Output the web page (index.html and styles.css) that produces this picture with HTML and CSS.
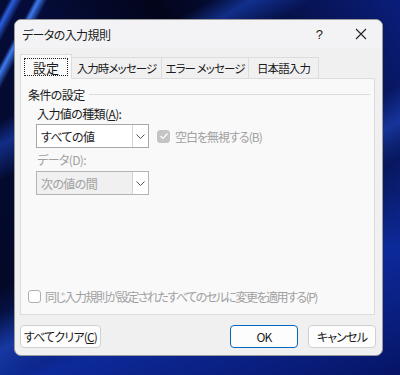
FILE: index.html
```html
<!DOCTYPE html>
<html lang="ja">
<head>
    <meta charset="utf-8">
    <title>データの入力規則</title>
    <link rel="stylesheet" href="styles.css">
</head>
<body>
    <div class="dialog">
        <div class="titlebar">
            <span class="title">データの入力規則</span>
            <span class="help">?</span>
            <span class="close">
                <svg width="12" height="12" viewBox="0 0 12 12"><path d="M1 1L11 11M11 1L1 11" stroke="#222" stroke-width="1.1"/></svg>
            </span>
        </div>

        <div class="tabs">
            <div class="tab active"><span class="focus">設定</span></div>
            <div class="tab">入力時メッセージ</div>
            <div class="tab">エラー メッセージ</div>
            <div class="tab">日本語入力</div>
        </div>

        <div class="panel">
            <div class="group-title">
                <span>条件の設定</span>
                <span class="rule"></span>
            </div>

            <div class="field-label">入力値の種類(<u>A</u>):</div>
            <div class="row">
                <div class="combo">
                    <span class="value">すべての値</span>
                    <span class="arrow"><svg width="9" height="5" viewBox="0 0 9 5"><path d="M0.5 0.5L4.5 4.5L8.5 0.5" fill="none" stroke="#555" stroke-width="1"/></svg></span>
                </div>
                <div class="check disabled">
                    <span class="box checked"><svg width="10" height="8" viewBox="0 0 10 8"><path d="M1.5 4L4 6.5L8.5 1.5" fill="none" stroke="#fff" stroke-width="1.2"/></svg></span>
                    <span class="ignore">空白を無視する(B)</span>
                </div>
            </div>

            <div class="field-label disabled">データ(D):</div>
            <div class="combo disabled">
                <span class="value">次の値の間</span>
                <span class="arrow"><svg width="9" height="5" viewBox="0 0 9 5"><path d="M0.5 0.5L4.5 4.5L8.5 0.5" fill="none" stroke="#555" stroke-width="1"/></svg></span>
            </div>

            <div class="check disabled apply">
                <span class="box"></span>
                <span class="apply-text">同じ入力規則が設定されたすべてのセルに変更を適用する(P)</span>
            </div>
        </div>

        <div class="footer">
            <button class="btn">すべてクリア(<u>C</u>)</button>
            <span class="spacer"></span>
            <button class="btn primary">OK</button>
            <button class="btn">キャンセル</button>
        </div>
    </div>
</body>
</html>
```

FILE: styles.css
```css
* {
    box-sizing: border-box;
}

body {
    margin: 0;
    width: 400px;
    height: 375px;
    overflow: hidden;
    font-family: "Noto Sans CJK JP", "Noto Sans", sans-serif;
    font-size: 12px;
    font-feature-settings: "palt";
    letter-spacing: -0.6px;
    white-space: nowrap;
    color: #1b1b1b;
    background:
        linear-gradient(118deg, transparent 0px, transparent 8px, #2a5fe0 12px, transparent 20px, transparent 30px, #3c7bf0 34px, transparent 42px),
        linear-gradient(150deg, transparent 20%, rgba(30, 80, 220, 0.5) 24%, transparent 30%, transparent 52%, rgba(40, 90, 230, 0.45) 58%, transparent 64%),
        linear-gradient(160deg, transparent 55%, #0d2a9a 75%, #061466 100%),
        linear-gradient(60deg, #030822 0%, #050c3a 40%, #02051a 60%, #0a1d7a 100%);
    padding: 19px 0 0 14px;
}

.dialog {
    width: 369px;
    height: 337px;
    background: #f0f0f0;
    border: 1px solid #9a9a9a;
    border-radius: 7px;
    display: flex;
    flex-direction: column;
    overflow: hidden;
}

.titlebar {
    height: 28px;
    display: flex;
    align-items: center;
    background: #f3f3f5;
    padding-left: 7px;
}

.title {
    flex: 1;
}

.help {
    width: 16px;
    text-align: center;
    font-family: "Liberation Sans", sans-serif;
    font-size: 13px;
    margin-right: 28px;
}

.close {
    width: 12px;
    height: 12px;
    margin-right: 15px;
    display: flex;
}

.tabs {
    display: flex;
    align-items: flex-end;
    margin: 6px 0 0 5px;
    height: 24px;
    position: relative;
    z-index: 1;
}

.tab {
    height: 21px;
    padding: 0;
    display: flex;
    align-items: center;
    justify-content: center;
    background: #f0f0f0;
    border: 1px solid #dcdcdc;
    border-bottom: none;
    margin-right: -1px;
    font-size: 11.5px;
    letter-spacing: -0.9px;
}

.tab:nth-child(2) { width: 91px; }
.tab:nth-child(3) { width: 88px; }
.tab:nth-child(4) { width: 71px; }

.tab.active {
    width: 52px;
    height: 25px;
    background: #f9f9f9;
    margin-bottom: -1px;
    padding: 0 3px;
    font-size: 13px;
    letter-spacing: 0;
}

.focus {
    display: flex;
    align-items: center;
    justify-content: center;
    width: 100%;
    height: 18px;
    border: 1px dotted #222;
}

.panel {
    margin: 0 7px 0 5px;
    height: 237px;
    background: #f9f9f9;
    border: 1px solid #dcdcdc;
    display: flex;
    flex-direction: column;
    padding: 7px 0 0 7px;
}

.group-title {
    display: flex;
    align-items: center;
    gap: 4px;
    height: 16px;
}

.rule {
    flex: 1;
    height: 1px;
    background: #dcdcdc;
    margin-right: 4px;
}

.field-label {
    margin: 3px 0 0 9px;
    height: 18px;
    line-height: 18px;
}

.disabled {
    color: #a0a0a0;
}

.row {
    display: flex;
    align-items: center;
    gap: 8px;
    margin-top: 1px;
}

.combo {
    margin-left: 8px;
    width: 113px;
    height: 24px;
    border: 1px solid #a8a8a8;
    background: #fff;
    display: flex;
    align-items: center;
}

.combo .value {
    flex: 1;
    padding-left: 4px;
}

.combo .arrow {
    width: 16px;
    height: 100%;
    border-left: 1px solid #d4d4d4;
    display: flex;
    align-items: center;
    justify-content: center;
    background: #fff;
}

.combo.disabled {
    background: #f0f0f0;
    border-color: #b4b4b4;
    margin-top: 2px;
}

.check {
    display: flex;
    align-items: center;
    gap: 5px;
}

.ignore {
    letter-spacing: -1px;
}

.box {
    width: 13px;
    height: 13px;
    border: 1px solid #b0b0b0;
    border-radius: 3px;
    background: #fff;
    display: flex;
    align-items: center;
    justify-content: center;
}

.box.checked {
    background: #c4c4c4;
    border-color: #c4c4c4;
}

.apply {
    margin-top: auto;
    margin-bottom: 9px;
    gap: 4px;
}

.apply-text {
    letter-spacing: -1.5px;
}

.footer {
    display: flex;
    align-items: center;
    padding: 10px 6px 0 5px;
    gap: 10px;
}

.spacer {
    flex: 1;
}

.btn {
    height: 23px;
    width: 68px;
    font-family: inherit;
    font-feature-settings: "palt";
    font-size: 12px;
    letter-spacing: -0.8px;
    color: #1b1b1b;
    background: #fdfdfd;
    border: 1px solid #d0d0d0;
    border-radius: 4px;
    padding: 0;
}

.btn:first-child {
    width: 81px;
}

.btn.primary {
    border-color: #0067c0;
}
```
